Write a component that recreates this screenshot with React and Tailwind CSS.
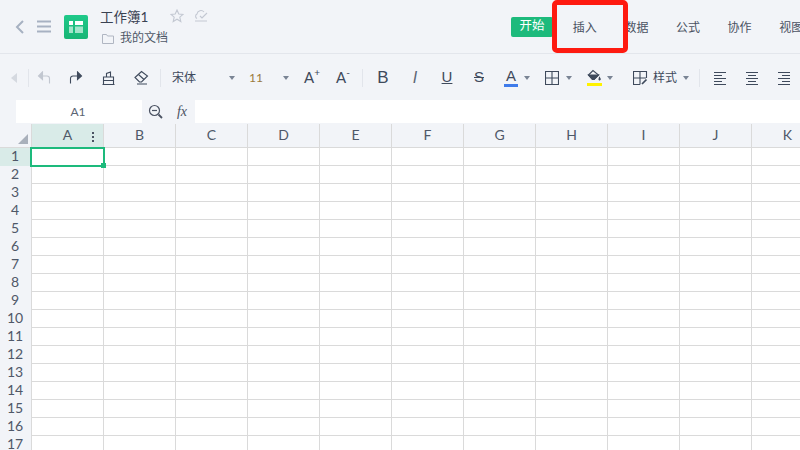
import React from 'react';

const columns = ['A', 'B', 'C', 'D', 'E', 'F', 'G', 'H', 'I', 'J', 'K'];
const rows = Array.from({ length: 17 }, (_, i) => i + 1);
const tabs = ['插入', '数据', '公式', '协作', '视图'];

const Icon = ({ children, w = 16, h = 16, className = '' }) => (
  <svg width={w} height={h} viewBox={`0 0 ${w} ${h}`} fill="none" stroke="#3f4a5c" strokeWidth="1.1" className={`shrink-0 ${className}`}>
    {children}
  </svg>
);

const Caret = ({ className = '' }) => (
  <span className={`shrink-0 w-0 h-0 border-x-[3.5px] border-x-transparent border-t-[4px] border-t-[#7a8494] ${className}`} />
);

const Sep = ({ className = '' }) => <span className={`shrink-0 w-px h-[18px] bg-[#e2e5eb] ${className}`} />;

const Btn = ({ className = '', children }) => (
  <div className={`flex items-center justify-center shrink-0 h-[24px] ${className}`}>{children}</div>
);

const AlignIcon = ({ mode, className }) => {
  const short = mode === 'left' ? 'M0 4.500h8M0 10.500h8' : mode === 'center' ? 'M2 4.500h8M2 10.500h8' : 'M4 4.500h8M4 10.500h8';
  return (
    <Icon w={12} h={14} className={className}>
      <path d="M0 1.500h12M0 7.500h12M0 13.500h12" />
      <path d={short} />
    </Icon>
  );
};

const TopBar = () => (
  <div className="h-[54px] shrink-0 flex items-center border-b border-[#e3e6ec] overflow-hidden">
    <div className="w-[37px] pl-[15px] shrink-0">
      <svg width="9" height="14" viewBox="0 0 9 14" fill="none" stroke="#a7b1c2" strokeWidth="2"><path d="M8 1 2 7l6 6" /></svg>
    </div>
    <div className="w-[27px] shrink-0">
      <svg width="15" height="13" viewBox="0 0 15 13" fill="none" stroke="#a7b1c2" strokeWidth="2"><path d="M0 1.500h14M0 6.500h14M0 11.500h14" /></svg>
    </div>
    <div className="w-[24px] h-[24px] rounded-[2px] bg-gradient-to-b from-[#1fc98a] to-[#18b575] flex items-center justify-center shrink-0">
      <svg width="14" height="12" viewBox="0 0 14 12">
        <path d="M0 0h4v4H0zM6 0h8v4H6z" fill="#fff" />
        <path d="M0 5.500h4V12H0zM6 5.500h8V12H6z" fill="#fff" opacity="0.6" />
      </svg>
    </div>
    <div className="ml-[12px] w-[70px] shrink-0 flex flex-col">
      <span className="text-[13.500px] leading-[18px] text-[#3a4252] whitespace-nowrap mt-[2px]">工作簿1</span>
      <div className="flex items-center mt-[3px] gap-[7px]">
        <span className="ml-[2px] flex">
          <svg width="12" height="11" viewBox="0 0 12 11" fill="none" stroke="#b0b6c2"><path d="M.5 1.500h4l1 1.500h6v7.500H.5z" /></svg>
        </span>
        <span className="-ml-px text-[12px] leading-[18px] text-[#4f5868] whitespace-nowrap">我的文档</span>
      </div>
    </div>
    <div className="flex items-center gap-[10px] -mt-[22px] shrink-0">
      <svg width="14" height="14" viewBox="0 0 14 14" fill="none" stroke="#c3c8d2" strokeWidth="1.100"><path d="m7 1 1.800 4 4.200.4-3.200 2.800 1 4.300L7 10.200 3.200 12.500l1-4.300L1 5.400l4.200-.4z" /></svg>
      <svg width="14" height="13" viewBox="0 0 14 13" fill="none" stroke="#c3c8d2" strokeWidth="1.100"><path d="M3 9.500A2.500 2.500 0 0 1 3 5a4 4 0 0 1 7-2M1 12h12M6 7l2 2 5-5" /></svg>
    </div>
    <div className="ml-auto flex items-center -mr-[17px] shrink-0">
      <div className="w-[42px] mr-[6px] h-[20px] rounded-[2px] bg-[#1dba7c] text-white text-[12.500px] flex items-center justify-center">开始</div>
      {tabs.map((t) => (
        <div key={t} className="w-[51.600px] mt-[2px] text-center text-[12px] text-[#4a5262]">{t}</div>
      ))}
    </div>
  </div>
);

const Toolbar = () => (
  <div className="h-[46px] shrink-0 flex items-center pl-[8px] pt-[1px] overflow-hidden">
    <Btn className="w-[12px]">
      <span className="w-0 h-0 border-y-[5px] border-y-transparent border-r-[6px] border-r-[#d5d9e0]" />
    </Btn>
    <Sep className="ml-[8px]" />
    <Btn className="w-[30px]">
      <Icon w={14} h={14}><path d="M12.500 12.500V7.500A2.500 2.500 0 0 0 10 5H3" stroke="#c2c7d0" /><path d="M5.500 1 1.500 5l4 3.500z" fill="#c2c7d0" stroke="#c2c7d0" /></Icon>
    </Btn>
    <Btn className="w-[34px]">
      <Icon w={14} h={14}><path d="M1.500 12.500V7.500A2.500 2.500 0 0 1 4 5h7" /><path d="M8.500 1l4 4-4 3.500z" fill="#3f4a5c" /></Icon>
    </Btn>
    <Btn className="w-[30px]">
      <Icon w={13} h={14}><path d="M.5 13.500h12M1.500 13.500V6h10v7.500M4.500 6V2.500l4-1.500v5M1.500 9.500h10" /></Icon>
    </Btn>
    <Btn className="w-[36px]">
      <Icon w={15} h={15}><path d="M1 7.500 7.500 1.500l6 4.500-6 6H5.500z" /><path d="m4.500 4.500 5.500 5M3 14h10" /></Icon>
    </Btn>
    <Sep className="ml-[1px]" />
    <span className="ml-[11px] w-[49px] shrink-0 text-[12px] text-[#3f4a5c]">宋体</span>
    <Caret className="ml-[8px]" />
    <span className="ml-[14px] w-[12px] shrink-0 text-[12px] text-[#9a7a3c]">11</span>
    <Caret className="ml-[22px]" />
    <Btn className="w-[40px]">
      <span className="relative text-[15px] text-[#3f4a5c] leading-none">
        A<span className="absolute -top-[3px] -right-[6px] text-[10px]">+</span>
      </span>
    </Btn>
    <Btn className="w-[24px]">
      <span className="relative text-[15px] text-[#3f4a5c] leading-none">
        A<span className="absolute -top-[3px] -right-[4px] text-[10px]">-</span>
      </span>
    </Btn>
    <Sep className="ml-[9px]" />
    <Btn className="w-[40px]"><span className="font-['Liberation_Sans',sans-serif] text-[17px] text-[#3f4a5c]">B</span></Btn>
    <Btn className="w-[24px]"><span className="font-['Liberation_Sans',sans-serif] text-[16px] italic text-[#5c6675]">I</span></Btn>
    <Btn className="w-[40px]"><span className="font-['Liberation_Sans',sans-serif] text-[15px] underline text-[#3f4a5c]">U</span></Btn>
    <Btn className="w-[24px]"><span className="font-['Liberation_Sans',sans-serif] text-[15px] line-through text-[#3f4a5c]">S</span></Btn>
    <div className="ml-[13px] w-[14px] flex flex-col items-center shrink-0">
      <span className="font-['Liberation_Sans',sans-serif] text-[15px] leading-[15px] text-[#3f4a5c]">A</span>
      <span className="mt-[1px] w-[14px] h-[3px] bg-[#3f7bea]" />
    </div>
    <Caret className="ml-[6px]" />
    <Icon w={14} h={14} className="ml-[15px]"><path d="M.5.500h13v13H.5zM7 .5v13M.5 7h13" /></Icon>
    <Caret className="ml-[7px]" />
    <div className="ml-[15px] w-[15px] flex flex-col items-center shrink-0">
      <svg width="15" height="13" viewBox="0 0 15 13" fill="none" stroke="#3f4a5c" strokeWidth="1.100">
        <path d="M1.500 6 6 1.500 11.500 6 7 10.500H5.500z" />
        <path d="M1.500 6h10L7 10.500H5.500z" fill="#3f4a5c" />
        <path d="M12.500 8.500c.8 1.200 1 1.700.6 2.200-.5.500-1.400 0-1.100-.7z" fill="#3f4a5c" />
      </svg>
      <span className="mt-[1px] w-[15px] h-[3px] bg-[#fff200]" />
    </div>
    <Caret className="ml-[5px]" />
    <Icon w={15} h={14} className="ml-[20px]"><path d="M7 13.500H.5V.5h13V7M7 .5v13M.5 7H13" /><path d="M9 13l4.500-4.500" strokeWidth="1.700" /></Icon>
    <span className="ml-[5px] w-[24px] shrink-0 text-[12px] text-[#3f4a5c]">样式</span>
    <Caret className="ml-[6px]" />
    <Sep className="ml-[10px]" />
    <AlignIcon mode="left" className="ml-[14px]" />
    <AlignIcon mode="center" className="ml-[20px]" />
    <AlignIcon mode="right" className="ml-[20px]" />
  </div>
);

const FormulaBar = () => (
  <div className="h-[24px] shrink-0 flex pl-[16px]">
    <div className="w-[126px] h-[23px] pr-[2px] bg-white text-[12px] text-[#5b6473] flex items-center justify-center shrink-0">A1</div>
    <div className="w-[27px] pb-[1px] flex items-center justify-center shrink-0">
      <svg width="15" height="15" viewBox="0 0 15 15" fill="none" stroke="#4a5262" strokeWidth="1.200">
        <circle cx="6.500" cy="6.500" r="5" />
        <path d="M4 6.500h5" />
        <path d="m10.500 10.500 3.500 3.500" strokeWidth="1.800" />
      </svg>
    </div>
    <div className="w-[26px] pb-[2px] flex items-center justify-center shrink-0 font-['Liberation_Serif',serif] text-[14px] italic text-[#4a5262]">fx</div>
    <div className="flex-1 h-[23px] bg-white" />
  </div>
);

const Sheet = () => (
  <div className="relative flex-1 overflow-hidden bg-white">
    <div className="flex h-[24px] bg-[#f2f4f8] border-b border-[#dadada]">
      <div className="w-[32px] shrink-0 flex items-end justify-end pb-[3px] pr-[3px] border-r border-[#dadada]">
        <span className="w-0 h-0 border-l-[10px] border-l-transparent border-b-[10px] border-b-[#a9b0bb]" />
      </div>
      {columns.map((c, i) => (
        <div key={c} className={`relative w-[72px] pb-[2px] shrink-0 flex items-center justify-center text-[14px] text-[#4f5868] border-r border-[#dadada] ${i === 0 ? 'bg-[#d9ebe8]' : ''}`}>
          {c}
          {i === 0 && <span className="absolute right-[9px] top-[8px] w-[2px] h-[2px] bg-[#4a5262] shadow-[0_4px_0_#4a5262,0_8px_0_#4a5262]" />}
        </div>
      ))}
    </div>
    {rows.map((r) => (
      <div key={r} className="flex h-[18px]">
        <div className={`w-[32px] pb-[2px] pr-[1px] shrink-0 flex items-center justify-center text-[14px] leading-[16px] text-[#4f5868] border-r border-[#dadada] ${r === 1 ? 'bg-[#d9ebe8]' : 'bg-[#f2f4f8]'}`}>{r}</div>
        {columns.map((c) => (
          <div key={c} className="w-[72px] shrink-0 border-r border-b border-[#dadada]" />
        ))}
      </div>
    ))}
    {/* selected cell sits over the grid */}
    <div className="absolute left-[30px] top-[23px] w-[75px] h-[20px] border-2 border-[#1dba7c]">
      <span className="absolute -right-[3px] -bottom-[3px] w-[5px] h-[5px] bg-[#1dba7c]" />
    </div>
  </div>
);

export default function App() {
  return (
    <div className="relative w-[800px] h-[450px] overflow-hidden bg-[#f2f4f8] flex flex-col font-['Lato','Noto_Sans_CJK_SC',sans-serif]">
      <TopBar />
      <Toolbar />
      <FormulaBar />
      <Sheet />
      {/* red annotation box drawn over the tab */}
      <div className="absolute left-[552px] top-0 w-[76px] h-[53px] border-[5px] border-[#fe1a10] rounded-[5px]" />
    </div>
  );
}
